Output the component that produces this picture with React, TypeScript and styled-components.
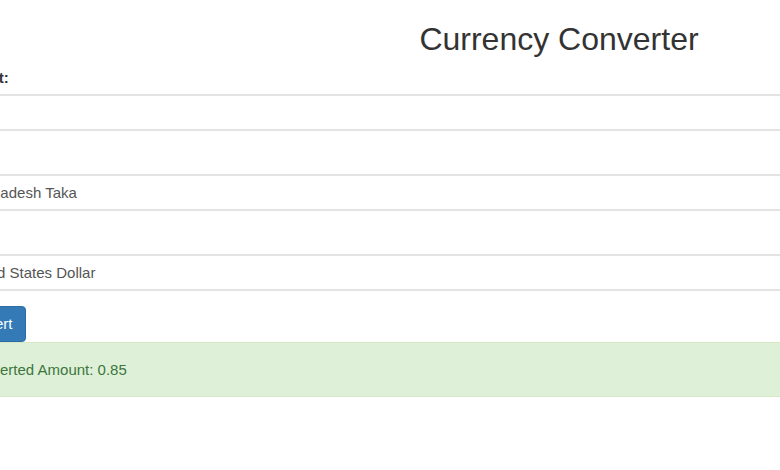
import React, { useState } from 'react';
import styled, { createGlobalStyle } from 'styled-components';

const GlobalStyle = createGlobalStyle`
  html, body {
    margin: 0;
    padding: 0;
    overflow: hidden;
    background: #fff;
  }
  body {
    font-family: "Liberation Sans", Arial, Helvetica, sans-serif;
    font-size: 15px;
    color: #333;
  }
  * {
    box-sizing: border-box;
  }
`;

const currencies = [
  { code: 'BDT', name: 'Bangladesh Taka' },
  { code: 'USD', name: 'United States Dollar' },
  { code: 'EUR', name: 'Euro' },
  { code: 'GBP', name: 'British Pound' },
];

const App: React.FC = () => {
  const [amount, setAmount] = useState('');
  const [from, setFrom] = useState('BDT');
  const [to, setTo] = useState('USD');

  return (
    <>
      <GlobalStyle />
      <Container>
        <Title>Currency Converter</Title>

        <FormGroup>
          <Label htmlFor="amount">Amount:</Label>
          <TextInput
            id="amount"
            type="text"
            value={amount}
            onChange={(e) => setAmount(e.target.value)}
          />
        </FormGroup>

        <FormGroup>
          <Label htmlFor="from">From:</Label>
          <Select id="from" value={from} onChange={(e) => setFrom(e.target.value)}>
            {currencies.map((c) => (
              <option key={c.code} value={c.code}>
                {c.name}
              </option>
            ))}
          </Select>
        </FormGroup>

        <FormGroup $last>
          <Label htmlFor="to">To:</Label>
          <Select id="to" value={to} onChange={(e) => setTo(e.target.value)}>
            {currencies.map((c) => (
              <option key={c.code} value={c.code}>
                {c.name}
              </option>
            ))}
          </Select>
        </FormGroup>

        <PrimaryButton type="button">Convert</PrimaryButton>

        <SuccessAlert>Converted Amount: 0.85</SuccessAlert>
      </Container>
    </>
  );
};

export default App;

// ============================================================================
// STYLED COMPONENTS
// ============================================================================

const Container = styled.div`
  width: 1222px;
  margin-left: -53px;
  padding-top: 22px;
`;

const Title = styled.h2`
  margin: 0 0 10px;
  padding-left: 2px;
  font-size: 32px;
  line-height: 35px;
  font-weight: normal;
  text-align: center;
  color: #333;
`;

const FormGroup = styled.div<{ $last?: boolean }>`
  margin-bottom: ${({ $last }) => ($last ? '15px' : '16px')};
`;

const Label = styled.label`
  display: block;
  height: 21px;
  margin-bottom: 6px;
  font-size: 15px;
  line-height: 21px;
  font-weight: bold;
  color: #333;
`;

const fieldStyles = `
  display: block;
  width: 100%;
  height: 37px;
  padding: 0 14px;
  font-family: "Liberation Sans", Arial, Helvetica, sans-serif;
  font-size: 15px;
  line-height: 20px;
  color: #555;
  background-color: #fff;
  border-style: solid;
  border-width: 2px 1px;
  border-color: #e3e3e3;
  border-radius: 4px;
  outline: none;
`;

const TextInput = styled.input`
  ${fieldStyles}
`;

const Select = styled.select`
  ${fieldStyles}
  appearance: none;
  -webkit-appearance: none;
`;

const PrimaryButton = styled.button`
  display: block;
  height: 36px;
  padding: 0 12px;
  font-family: "Liberation Sans", Arial, Helvetica, sans-serif;
  font-size: 15px;
  line-height: 20px;
  color: #fff;
  background-color: #337ab7;
  border: 1px solid #2e6da4;
  border-radius: 4px;
  cursor: pointer;
`;

const SuccessAlert = styled.div`
  height: 55px;
  padding: 0 17px;
  display: flex;
  align-items: center;
  font-size: 15px;
  color: #3c763d;
  background-color: #dff0d8;
  border: 1px solid #d6e9c6;
  border-radius: 4px;
`;
